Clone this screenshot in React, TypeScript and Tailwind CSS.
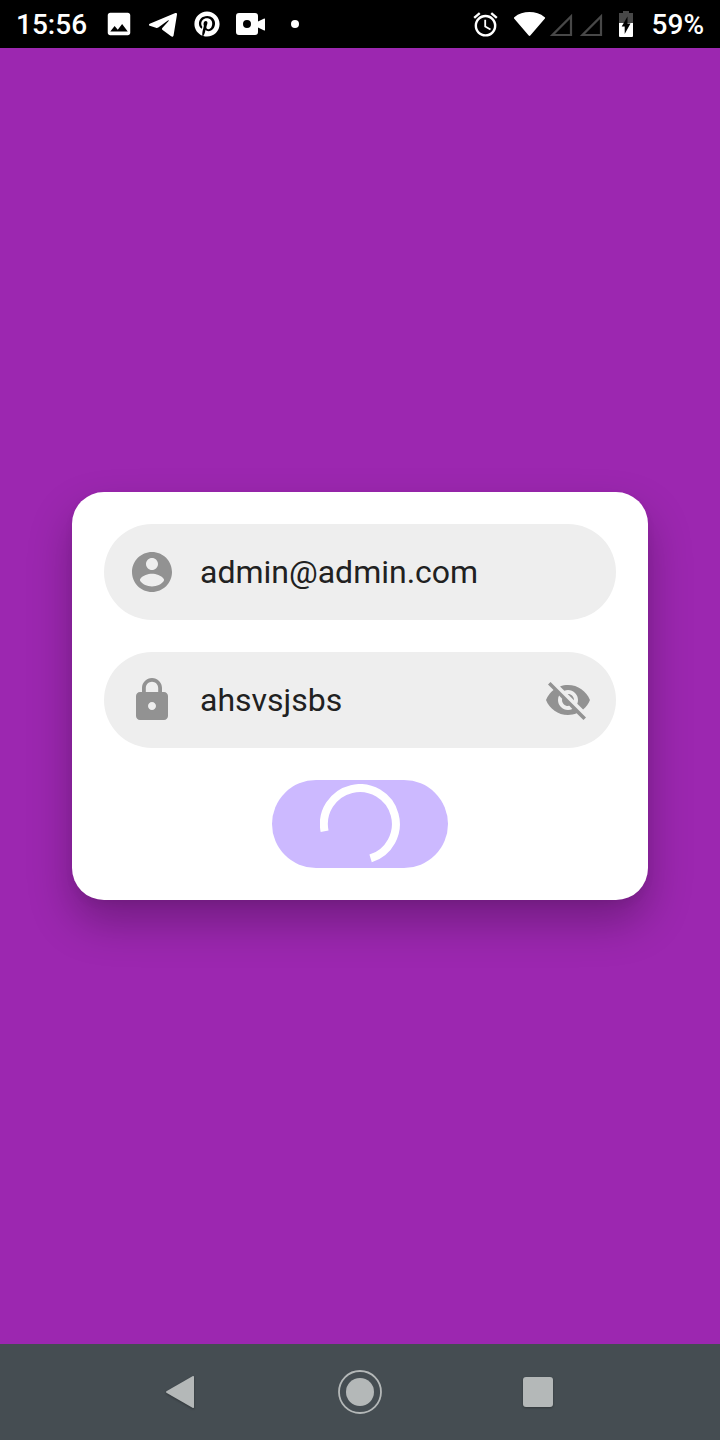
import { useState } from "react";
import { FaPinterest } from "react-icons/fa";
import { MdAlarm, MdImage, MdLock, MdVisibility, MdVisibilityOff } from "react-icons/md";

function TelegramIcon() {
  return (
    <svg viewBox="0 0 32 32" className="h-8 w-8" fill="currentColor" aria-hidden="true">
      <path d="M2.700 15.700 28.300 5.100c1.200-.4 1.900.2 1.700 1.500L26.600 27.200c-.3 1.500-1.300 1.900-2.500 1L15.300 21.800c-.5-.5-.5-1.200 0-1.700L21.600 13c.4-.6-.1-1-.7-.6L11.300 19.500c-.8.500-1.500.6-2.400.3L2.800 17.800c-1.100-.5-1.100-1.500-.1-2.100Z" />
    </svg>
  );
}

function VideoIcon() {
  return (
    <svg viewBox="0 0 32 32" className="h-8 w-8" fill="currentColor" aria-hidden="true">
      <path
        fillRule="evenodd"
        d="M4 5h16a3 3 0 0 1 3 3v5.500l6.200-3a.6.6 0 0 1 .8.500v11a.6.6 0 0 1-.8.500L23 19.500V24a3 3 0 0 1-3 3H4a3 3 0 0 1-3-3V8a3 3 0 0 1 3-3Zm8 7a4 4 0 1 0 0 8 4 4 0 0 0 0-8Z"
      />
    </svg>
  );
}

function WifiIcon() {
  return (
    <svg viewBox="0 0 32 32" className="h-8 w-8" fill="currentColor" aria-hidden="true">
      <path d="M.3 9.200C4.500 5.500 10 4 15.500 4s11 1.500 15.200 5.200c.5.400.6.900.2 1.400L16.300 27.500c-.5.500-1.100.5-1.600 0L.1 10.600c-.4-.5-.3-1 .2-1.400Z" />
    </svg>
  );
}

function SignalIcon() {
  return (
    <svg viewBox="0 0 30 32" className="h-8 w-[30px]" fill="none" aria-hidden="true">
      <path d="M25 8.500V27H6.500Z" stroke="#484848" strokeWidth="2.200" />
    </svg>
  );
}

function BatteryIcon() {
  return (
    <svg viewBox="0 0 40 32" className="h-8 w-10" aria-hidden="true">
      <path d="M17 3h6v2h4v10H13V5h4Z" fill="#484848" />
      <path d="M13 15h14v13a1 1 0 0 1-1 1H14a1 1 0 0 1-1-1Z" fill="#fff" />
      <path d="M21.500 8.500v7H24.500L18.700 26v-7.500H15.700Z" fill="#000" />
    </svg>
  );
}

function AccountIcon() {
  return (
    <svg viewBox="0 0 24 24" className="h-12 w-12" fill="currentColor" aria-hidden="true">
      <path d="M12 2C6.480 2 2 6.480 2 12s4.480 10 10 10 10-4.480 10-10S17.520 2 12 2zm0 3c1.660 0 3 1.340 3 3s-1.340 3-3 3-3-1.340-3-3 1.340-3 3-3zm0 14.200c-2.500 0-4.710-1.100-5.800-2.600-.3-.4-.3-.8 0-1.200C7.400 13.800 10 12.900 12 12.900s4.600.9 5.800 2.500c.3.400.3.800 0 1.200-1.090 1.500-3.300 2.600-5.800 2.600z" />
    </svg>
  );
}

function StatusBar() {
  return (
    <header className="flex h-12 items-center justify-between bg-black px-4 text-[28px] font-medium text-white">
      <div className="flex items-center gap-3">
        <time className="mr-1 pt-0.5">15:56</time>
        <span className="flex w-8 justify-center"><MdImage size={30} /></span>
        <TelegramIcon />
        <span className="flex w-8 justify-center"><FaPinterest size={26} /></span>
        <VideoIcon />
        <span className="flex w-8 justify-center">
          <span className="h-2 w-2 rounded-full bg-white" />
        </span>
      </div>
      <div className="flex items-center">
        <span className="mr-3 flex w-8 justify-center"><MdAlarm size={29} /></span>
        <WifiIcon />
        <SignalIcon />
        <SignalIcon />
        <BatteryIcon />
        <span className="ml-1.5 pt-0.5">59%</span>
      </div>
    </header>
  );
}

function LoginCard() {
  const [email, setEmail] = useState("admin@admin.com");
  const [password, setPassword] = useState("ahsvsjsbs");
  const [visible, setVisible] = useState(true);

  return (
    <form
      onSubmit={(e) => e.preventDefault()}
      className="flex w-full flex-col gap-8 rounded-[32px] bg-white p-8 shadow-[0_4px_8px_rgba(0,0,0,0.05),0_22px_44px_rgba(0,0,0,0.27)]"
    >
      <label className="flex h-24 items-center gap-6 rounded-full bg-[#eeeeee] px-6 text-[#929292]">
        <AccountIcon />
        <input
          type="email"
          aria-label="Email"
          value={email}
          onChange={(e) => setEmail(e.target.value)}
          className="min-w-0 flex-1 bg-transparent text-[32px] text-[#212121] outline-none"
        />
      </label>
      <div className="flex h-24 items-center gap-6 rounded-full bg-[#eeeeee] px-6 text-[#929292]">
        <MdLock size={48} />
        <input
          type={visible ? "text" : "password"}
          aria-label="Password"
          value={password}
          onChange={(e) => setPassword(e.target.value)}
          className="min-w-0 flex-1 bg-transparent text-[32px] text-[#212121] outline-none"
        />
        <button type="button" aria-label="Toggle password visibility" onClick={() => setVisible(!visible)}>
          {visible ? <MdVisibilityOff size={48} /> : <MdVisibility size={48} />}
        </button>
      </div>
      <button
        type="submit"
        aria-label="Signing in"
        className="flex h-[88px] w-44 items-center justify-center self-center rounded-full bg-[#ccb9ff]"
      >
        <svg viewBox="0 0 80 80" className="h-20 w-20" fill="none" aria-hidden="true">
          <path d="M4.600 47.200A36 36 0 1 1 50.600 74.400" stroke="#fff" strokeWidth="8" />
        </svg>
      </button>
    </form>
  );
}

function NavigationBar() {
  return (
    <nav className="flex h-24 items-center justify-center bg-[#454d52] text-[#b4b8b8]">
      <button type="button" aria-label="Back" className="flex w-[178px] justify-center">
        <svg viewBox="0 0 48 48" className="h-12 w-12 drop-shadow-[0_1px_1px_rgba(0,0,0,0.3)]" fill="currentColor" aria-hidden="true">
          <path d="M34.500 8.200c.9-.5 1.500 0 1.500.9v29.800c0 .9-.6 1.400-1.500.9L8.800 25c-1.100-.7-1.100-1.300 0-2Z" />
        </svg>
      </button>
      <button type="button" aria-label="Home" className="flex w-[178px] justify-center">
        <svg viewBox="0 0 48 48" className="h-12 w-12" aria-hidden="true">
          <circle cx="24" cy="24" r="21" fill="none" stroke="currentColor" strokeWidth="1.800" />
          <circle cx="24" cy="24" r="14" fill="currentColor" />
        </svg>
      </button>
      <button type="button" aria-label="Recent apps" className="flex w-[178px] justify-center">
        <svg viewBox="0 0 48 48" className="h-12 w-12 drop-shadow-[0_1px_1px_rgba(0,0,0,0.3)]" fill="currentColor" aria-hidden="true">
          <rect x="9" y="9" width="30" height="30" rx="3" />
        </svg>
      </button>
    </nav>
  );
}

export default function App() {
  return (
    <div className="flex min-h-screen flex-col bg-[#9c27b0] font-['Roboto',sans-serif]">
      <StatusBar />
      <main className="flex flex-1 items-center justify-center px-[72px]">
        <LoginCard />
      </main>
      <NavigationBar />
    </div>
  );
}
